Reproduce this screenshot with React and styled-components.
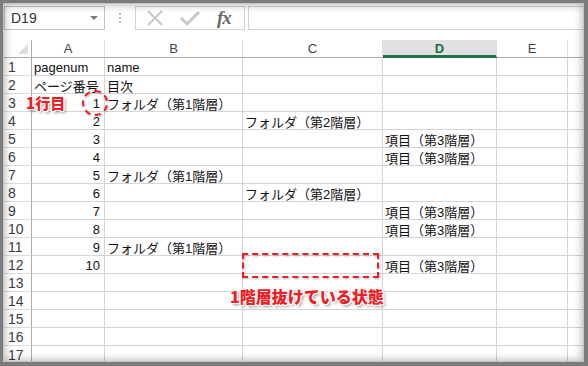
import React from "react";
import styled, { createGlobalStyle } from "styled-components";

const Global = createGlobalStyle`
  html, body { margin: 0; padding: 0; background: #fff; overflow: hidden; }
  #root { width: 588px; height: 366px; }
`;

const Frame = styled.div`
  position: relative;
  box-sizing: border-box;
  width: 588px;
  height: 366px;
  border-style: solid;
  border-color: #7c7c7c;
  border-width: 3px 4px 4px 3px;
  background: #fff;
  overflow: hidden;
  font-family: "Liberation Sans", "Noto Sans CJK JP", sans-serif;
`;

const Shade = styled.div`
  position: absolute;
  inset: 0;
  pointer-events: none;
  box-shadow: inset 0 0 0 1px #c4c4c4, inset 0 0 9px 2px rgba(0, 0, 0, 0.28);
  z-index: 5;
`;

const FormulaBar = styled.div`
  display: flex;
  align-items: stretch;
  height: 24px;
  padding: 3px 0 10px 1px;
`;

const NameBox = styled.div`
  box-sizing: border-box;
  width: 101px;
  border: 1px solid #c6c6c6;
  display: flex;
  align-items: center;
  justify-content: space-between;
  padding: 0 6px 0 6px;
  font-size: 14px;
  color: #333;
`;

const Arrow = styled.span`
  width: 0;
  height: 0;
  border-left: 4px solid transparent;
  border-right: 4px solid transparent;
  border-top: 4px solid #7a7a7a;
`;

const Dots = styled.div`
  width: 30px;
  display: flex;
  flex-direction: column;
  align-items: center;
  justify-content: center;
  gap: 2px;
  & > span { width: 2px; height: 2px; background: #b8b8b8; }
`;

const FxBox = styled.div`
  box-sizing: border-box;
  width: 110px;
  border: 1px solid #d2d2d2;
  display: flex;
  align-items: center;
  padding: 0 8px 0 9px;
  gap: 14px;
`;

const FxText = styled.span`
  font-family: "Liberation Serif", serif;
  font-style: italic;
  font-weight: bold;
  font-size: 19px;
  color: #6a6a6a;
  margin-left: 2px;
  letter-spacing: -1px;
`;

const Input = styled.div`
  flex: 1;
  margin-left: 3px;
  border: 1px solid #d2d2d2;
  border-right: none;
`;

const Sheet = styled.div`
  display: grid;
  grid-template-columns: 29px 73px 138px 140px 114px 71px 1fr;
  grid-auto-rows: 18px;
`;

const ColHead = styled.div`
  box-sizing: border-box;
  border-bottom: ${(p) => (p.$sel ? "3px solid #217346" : "1px solid #ababab")};
  border-right: 1px solid ${(p) => (p.$corner ? "#ababab" : "#dcdcdc")};
  background: ${(p) => (p.$sel ? "#e1e1e1" : "#fff")};
  color: ${(p) => (p.$sel ? "#1f6b45" : "#444")};
  font-size: 13px;
  font-weight: ${(p) => (p.$sel ? "bold" : "normal")};
  display: flex;
  align-items: center;
  justify-content: center;
  padding-top: ${(p) => (p.$sel ? "2px" : "0")};
  position: relative;
`;

const Corner = styled.span`
  position: absolute;
  right: 3px;
  bottom: 3px;
  width: 0;
  height: 0;
  border-left: 10px solid transparent;
  border-bottom: 10px solid #dcdcdc;
`;

const RowHead = styled.div`
  box-sizing: border-box;
  border-bottom: 1px solid #dcdcdc;
  border-right: 1px solid #ababab;
  color: #3c3c3c;
  font-size: 14px;
  display: flex;
  align-items: center;
  padding-left: 5px;
  padding-top: 1px;
`;

const Cell = styled.div`
  box-sizing: border-box;
  border-bottom: 1px solid #d4d4d4;
  border-right: 1px solid #d4d4d4;
  font-size: 13px;
  color: #111;
  display: flex;
  align-items: center;
  justify-content: ${(p) => (p.$num ? "flex-end" : "flex-start")};
  padding: 1px 4px 0 2px;
  white-space: nowrap;
  overflow: visible;
  position: relative;
  z-index: ${(p) => (p.$text ? 1 : 0)};
`;

const Note = styled.div`
  position: absolute;
  left: ${(p) => p.$x}px;
  top: ${(p) => p.$y}px;
  font-family: "Noto Sans CJK JP", sans-serif;
  font-weight: 900;
  font-size: ${(p) => p.$size}px;
  line-height: 1;
  color: #f01c24;
  white-space: nowrap;
  z-index: 4;
  text-shadow: 1px 0 0 #fff, -1px 0 0 #fff, 0 1px 0 #fff, 0 -1px 0 #fff,
    1px 1px 0 #fff, -1px -1px 0 #fff, 1px -1px 0 #fff, -1px 1px 0 #fff,
    2px 2px 3px rgba(0, 0, 0, 0.45);
`;

const Circle = styled.div`
  position: absolute;
  left: 79px;
  top: 87px;
  width: 26px;
  height: 26px;
  box-sizing: border-box;
  border: 2px dashed #f01c24;
  border-radius: 50%;
  z-index: 4;
  filter: drop-shadow(1px 1px 1px rgba(0, 0, 0, 0.3));
`;

const DashRect = styled.div`
  position: absolute;
  left: 239px;
  top: 250px;
  width: 137px;
  height: 25px;
  box-sizing: border-box;
  border: 2px dashed #f01c24;
  z-index: 4;
  filter: drop-shadow(1px 1px 1px rgba(0, 0, 0, 0.3));
`;

const L1 = "フォルダ（第1階層）";
const L2 = "フォルダ（第2階層）";
const L3 = "項目（第3階層）";

const rows = [
  ["pagenum", "name"],
  ["ページ番号", "目次"],
  [1, L1],
  [2, "", L2],
  [3, "", "", L3],
  [4, "", "", L3],
  [5, L1],
  [6, "", L2],
  [7, "", "", L3],
  [8, "", "", L3],
  [9, L1],
  [10, "", "", L3],
  [],
  [],
  [],
  [],
  [],
];

const cols = ["A", "B", "C", "D", "E", ""];

export default function App() {
  return (
    <>
      <Global />
      <Frame>
        <FormulaBar>
          <NameBox>
            <span>D19</span>
            <Arrow />
          </NameBox>
          <Dots>
            <span />
            <span />
            <span />
          </Dots>
          <FxBox>
            <svg width="20" height="20" viewBox="0 0 20 20">
              <path d="M3 3 L17 17 M17 3 L3 17" stroke="#c8c8c8" strokeWidth="2" fill="none" />
            </svg>
            <svg width="22" height="20" viewBox="0 0 22 20">
              <path d="M2 10 L8 16 L20 4" stroke="#c8c8c8" strokeWidth="3" fill="none" />
            </svg>
            <FxText>fx</FxText>
          </FxBox>
          <Input />
        </FormulaBar>
        <Sheet>
          <ColHead $corner>
            <Corner />
          </ColHead>
          {cols.map((c, i) => (
            <ColHead key={i} $sel={c === "D"}>
              {c}
            </ColHead>
          ))}
          {rows.map((r, ri) => (
            <React.Fragment key={ri}>
              <RowHead>{ri + 1}</RowHead>
              {[0, 1, 2, 3, 4, 5].map((ci) => {
                const v = r[ci];
                return (
                  <Cell key={ci} $num={typeof v === "number"} $text={!!v || v === 0}>
                    {v}
                  </Cell>
                );
              })}
            </React.Fragment>
          ))}
        </Sheet>
        <Note $x={23} $y={92} $size={15}>
          1行目
        </Note>
        <Circle />
        <DashRect />
        <Note $x={227} $y={285} $size={16}>
          1階層抜けている状態
        </Note>
        <Shade />
      </Frame>
    </>
  );
}
